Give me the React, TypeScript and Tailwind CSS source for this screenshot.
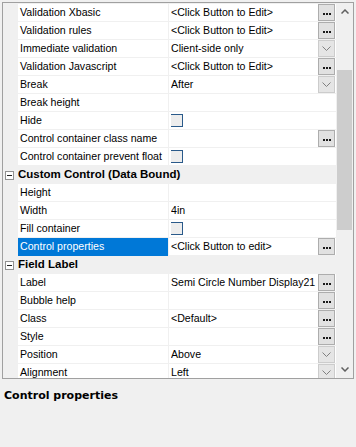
import React from 'react';

type Kind = 'dots' | 'drop' | 'check' | 'none';

type PropRow =
  | { type: 'group'; title: string }
  | { type: 'prop'; name: string; value?: string; kind: Kind; selected?: boolean };

const rows: PropRow[] = [
  { type: 'prop', name: 'Validation Xbasic', value: '<Click Button to Edit>', kind: 'dots' },
  { type: 'prop', name: 'Validation rules', value: '<Click Button to Edit>', kind: 'dots' },
  { type: 'prop', name: 'Immediate validation', value: 'Client-side only', kind: 'drop' },
  { type: 'prop', name: 'Validation Javascript', value: '<Click Button to Edit>', kind: 'dots' },
  { type: 'prop', name: 'Break', value: 'After', kind: 'drop' },
  { type: 'prop', name: 'Break height', kind: 'none' },
  { type: 'prop', name: 'Hide', kind: 'check' },
  { type: 'prop', name: 'Control container class name', kind: 'dots' },
  { type: 'prop', name: 'Control container prevent float', kind: 'check' },
  { type: 'group', title: 'Custom Control (Data Bound)' },
  { type: 'prop', name: 'Height', kind: 'none' },
  { type: 'prop', name: 'Width', value: '4in', kind: 'none' },
  { type: 'prop', name: 'Fill container', kind: 'check' },
  { type: 'prop', name: 'Control properties', value: '<Click Button to edit>', kind: 'dots', selected: true },
  { type: 'group', title: 'Field Label' },
  { type: 'prop', name: 'Label', value: 'Semi Circle Number Display21', kind: 'dots' },
  { type: 'prop', name: 'Bubble help', kind: 'dots' },
  { type: 'prop', name: 'Class', value: '<Default>', kind: 'dots' },
  { type: 'prop', name: 'Style', kind: 'dots' },
  { type: 'prop', name: 'Position', value: 'Above', kind: 'drop' },
  { type: 'prop', name: 'Alignment', value: 'Left', kind: 'drop' },
];

const DotsButton = () => (
  <div className="w-[17px] h-[17px] shrink-0 mr-[1px] bg-[#e1e1e1] border border-[#adadad] flex items-center justify-center gap-[1px] pt-[2px]">
    <span className="w-[2px] h-[2px] bg-[#1a1a1a]" />
    <span className="w-[2px] h-[2px] bg-[#1a1a1a]" />
    <span className="w-[2px] h-[2px] bg-[#1a1a1a]" />
  </div>
);

const DropButton = () => (
  <div className="w-[17px] h-[17px] shrink-0 mr-[1px] bg-[#e5e5e5] border border-[#cccccc] flex items-center justify-center">
    <svg width="9" height="5" viewBox="0 0 9 5">
      <polyline points="0.5,0.5 4.5,4.5 8.5,0.5" fill="none" stroke="#808080" strokeWidth="1" />
    </svg>
  </div>
);

const CheckBox = () => (
  <div className="w-[13px] h-[13px] -ml-[1px] border border-[#2a5a8a] bg-[#ededed]" />
);

const GroupRow = ({ title }: { title: string }) => (
  <div className="flex h-[18px] shrink-0 bg-[#f0f0f0] items-center">
    <div className="w-[15px] shrink-0 flex items-center pl-[2px]">
      <div className="w-[9px] h-[9px] border border-[#919191] bg-white flex items-center justify-center">
        <span className="w-[5px] h-[1px] bg-[#222]" />
      </div>
    </div>
    <span className="font-bold text-[11.5px] whitespace-nowrap text-black">{title}</span>
  </div>
);

const Row = ({ name, value, kind, selected }: { name: string; value?: string; kind: Kind; selected?: boolean }) => (
  <div className="flex h-[18px] shrink-0">
    <div className="w-[15px] shrink-0 bg-[#f0f0f0]" />
    <div
      className={
        selected
          ? 'w-[150px] shrink-0 pl-[2px] flex items-center overflow-hidden whitespace-nowrap bg-[#0078d7] text-white'
          : 'w-[150px] shrink-0 pl-[2px] flex items-center overflow-hidden whitespace-nowrap bg-white text-black border-b border-[#f0f0f0]'
      }
    >
      {name}
    </div>
    <div className="flex-1 min-w-0 bg-white border-l border-b border-[#f0f0f0] flex items-start pl-[2px]">
      <div className="flex-1 min-w-0 h-[17px] flex items-center whitespace-nowrap overflow-hidden">
        {kind === 'check' ? <CheckBox /> : value}
      </div>
      {kind === 'dots' && <DotsButton />}
      {kind === 'drop' && <DropButton />}
    </div>
  </div>
);

const ScrollBar = () => (
  <div className="w-[17px] shrink-0 bg-[#f0f0f0] flex flex-col">
    <div className="h-[17px] shrink-0 flex items-center justify-center">
      <svg width="8" height="5" viewBox="0 0 8 5">
        <polyline points="0.5,4.5 4,1 7.5,4.5" fill="none" stroke="#606060" strokeWidth="1.5" />
      </svg>
    </div>
    <div className="flex-1">
      <div className="mt-[50px] ml-[1px] w-[15px] h-[160px] bg-[#cdcdcd]" />
    </div>
    <div className="h-[17px] shrink-0 flex items-center justify-center">
      <svg width="8" height="5" viewBox="0 0 8 5">
        <polyline points="0.5,0.5 4,4 7.5,0.5" fill="none" stroke="#606060" strokeWidth="1.5" />
      </svg>
    </div>
  </div>
);

const App: React.FC = () => {
  return (
    <div className="w-[356px] h-[447px] bg-[#f0f0f0] pt-[2px] pl-[2px] text-[10.6px] font-['Liberation_Sans',Arial,sans-serif] text-black overflow-hidden">
      {/* Property grid */}
      <div className="w-[352px] h-[377px] border border-[#a0a0a0] flex overflow-hidden">
        <div className="w-[333px] shrink-0 flex flex-col pt-[1px] bg-[#f0f0f0] overflow-hidden">
          {rows.map((r, i) =>
            r.type === 'group' ? (
              <GroupRow key={i} title={r.title} />
            ) : (
              <Row key={i} name={r.name} value={r.value} kind={r.kind} selected={r.selected} />
            )
          )}
        </div>
        <ScrollBar />
      </div>

      {/* Description */}
      <div className="mt-[9px] pl-[2px] font-['DejaVu_Sans',sans-serif] font-bold text-[11px] text-black">
        Control properties
      </div>
    </div>
  );
};

export default App;
